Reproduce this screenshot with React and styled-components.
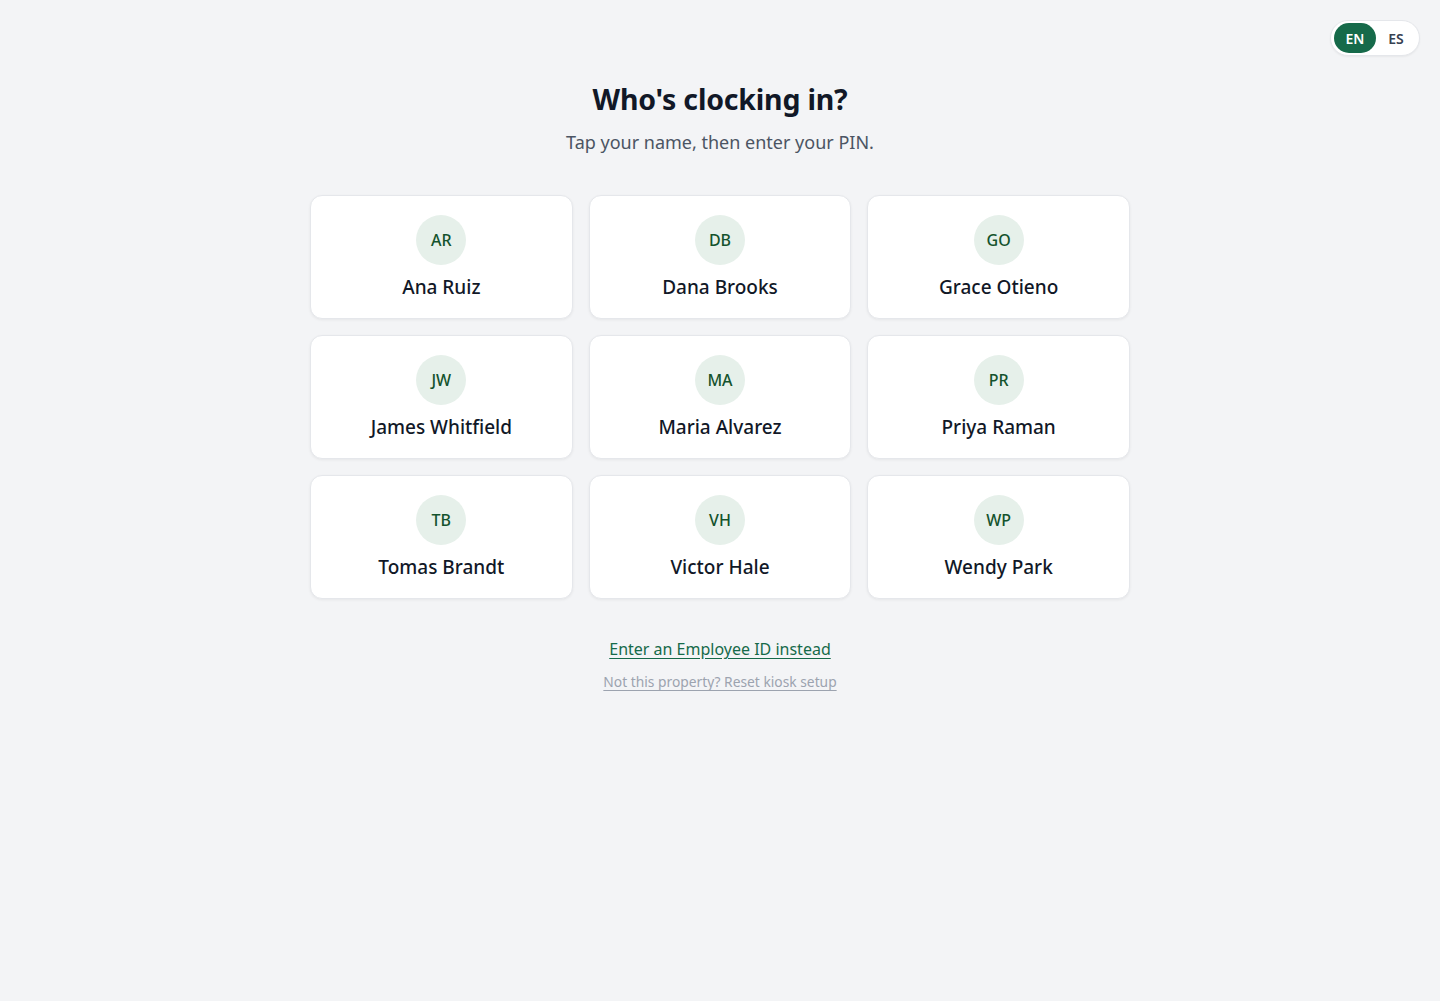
import React, { useState } from "react";
import styled, { createGlobalStyle } from "styled-components";

const GlobalStyle = createGlobalStyle`
  html, body {
    margin: 0;
    padding: 0;
    background: #f3f4f6;
    font-family: "Noto Sans", "Open Sans", Arial, sans-serif;
    color: #111827;
  }
  * { box-sizing: border-box; }
`;

const Page = styled.div`
  position: relative;
  min-height: 1001px;
  display: flex;
  flex-direction: column;
  align-items: center;
  padding-top: 77px;
`;

const LangToggle = styled.div`
  position: absolute;
  top: 20px;
  right: 20px;
  display: flex;
  padding: 2px 3px;
  background: #ffffff;
  border: 1px solid #e5e7eb;
  border-radius: 999px;
  box-shadow: 0 1px 2px rgba(0, 0, 0, 0.05);
`;

const LangButton = styled.button`
  border: none;
  cursor: pointer;
  height: 30px;
  width: ${(p) => (p.$active ? "42px" : "40px")};
  padding: 0;
  border-radius: 999px;
  font-family: inherit;
  font-size: 14px;
  font-weight: 600;
  background: ${(p) => (p.$active ? "#166a4a" : "transparent")};
  color: ${(p) => (p.$active ? "#ffffff" : "#374151")};
`;

const Title = styled.h1`
  margin: 0;
  font-size: 28.5px;
  line-height: 44px;
  font-weight: 700;
  color: #111827;
  letter-spacing: -0.2px;
`;

const Subtitle = styled.p`
  margin: 0;
  margin-top: 8px;
  font-size: 18px;
  line-height: 26px;
  color: #4b5563;
`;

const Grid = styled.div`
  margin-top: 40px;
  width: 820px;
  display: grid;
  grid-template-columns: repeat(3, 1fr);
  gap: 16px;
`;

const Card = styled.button`
  height: 124px;
  display: flex;
  flex-direction: column;
  align-items: center;
  justify-content: flex-start;
  gap: 7px;
  padding: 19px 12px 0;
  background: #ffffff;
  border: 1px solid #e5e7eb;
  border-radius: 12px;
  box-shadow: 0 1px 3px rgba(0, 0, 0, 0.06);
  cursor: pointer;
  font-family: inherit;
`;

const Avatar = styled.div`
  width: 50px;
  height: 50px;
  border-radius: 50%;
  background: #e6f0ea;
  color: #14532d;
  display: flex;
  align-items: center;
  justify-content: center;
  font-size: 16px;
  font-weight: 500;
`;

const Name = styled.div`
  font-size: 19px;
  line-height: 30px;
  font-weight: 500;
  color: #111827;
`;

const Links = styled.div`
  margin-top: 37px;
  display: flex;
  flex-direction: column;
  align-items: center;
  gap: 9px;
`;

const PrimaryLink = styled.a`
  font-size: 16px;
  line-height: 26px;
  color: #166a4a;
  text-decoration: underline;
  text-underline-offset: 3px;
  cursor: pointer;
`;

const MutedLink = styled.a`
  font-size: 13.8px;
  line-height: 22px;
  color: #9ca3af;
  text-decoration: underline;
  text-underline-offset: 3px;
  cursor: pointer;
`;

const employees = [
  "Ana Ruiz",
  "Dana Brooks",
  "Grace Otieno",
  "James Whitfield",
  "Maria Alvarez",
  "Priya Raman",
  "Tomas Brandt",
  "Victor Hale",
  "Wendy Park",
];

const initials = (name) =>
  name
    .split(" ")
    .map((p) => p[0])
    .join("")
    .toUpperCase();

export default function App() {
  const [lang, setLang] = useState("EN");
  return (
    <>
      <GlobalStyle />
      <Page>
        <LangToggle>
          {["EN", "ES"].map((l) => (
            <LangButton key={l} $active={lang === l} onClick={() => setLang(l)}>
              {l}
            </LangButton>
          ))}
        </LangToggle>
        <Title>Who's clocking in?</Title>
        <Subtitle>Tap your name, then enter your PIN.</Subtitle>
        <Grid>
          {employees.map((name) => (
            <Card key={name}>
              <Avatar>{initials(name)}</Avatar>
              <Name>{name}</Name>
            </Card>
          ))}
        </Grid>
        <Links>
          <PrimaryLink>Enter an Employee ID instead</PrimaryLink>
          <MutedLink>Not this property? Reset kiosk setup</MutedLink>
        </Links>
      </Page>
    </>
  );
}
